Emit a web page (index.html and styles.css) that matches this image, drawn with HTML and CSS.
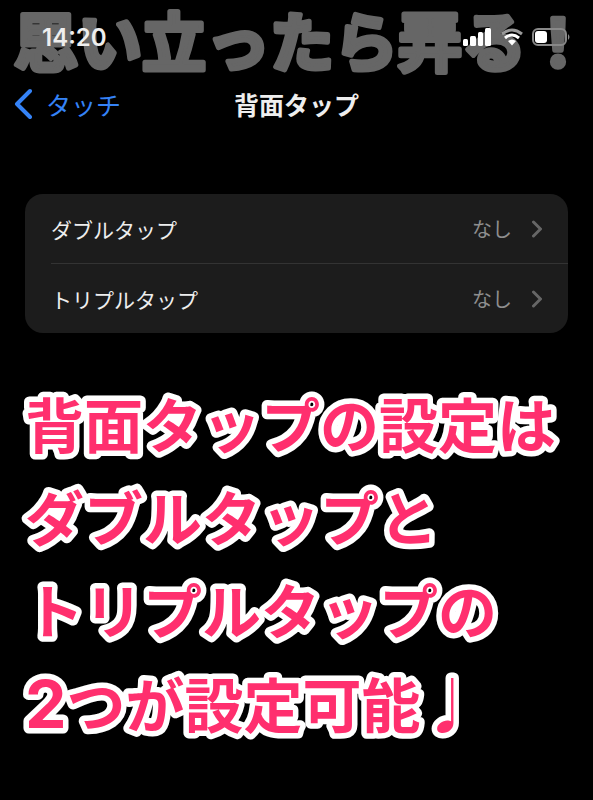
FILE: index.html
```
<!DOCTYPE html>
<html lang="ja">
<head>
<meta charset="utf-8">
<meta name="viewport" content="width=device-width, initial-scale=1">
<title>背面タップ</title>
<link rel="stylesheet" href="styles.css">
</head>
<body>
<header class="status">
	<svg class="watermark"><text x="14" y="66">思い立ったら弄る！</text></svg>
	<span class="time">14:20</span>
	<div class="indicators">
		<svg class="signal" width="29" height="20" viewBox="0 0 29 20">
			<rect x="0" y="12" width="5" height="7" rx="1.5"/>
			<rect x="7" y="9" width="6" height="10" rx="1.5"/>
			<rect x="15" y="5" width="5" height="14" rx="1.5"/>
			<rect x="22" y="1" width="6" height="18" rx="1.5"/>
		</svg>
		<svg class="wifi" width="22" height="20" viewBox="0 0 22 20">
			<path class="arc dim" d="M1 7Q11 -1 21 7"/>
			<path class="arc" d="M4 11Q11 5 18 11"/>
			<path d="M7 14Q11 11 15 14L11 18.500Z"/>
		</svg>
		<svg class="battery" width="39" height="20" viewBox="0 0 39 20">
			<rect class="shell" x="1" y="2" width="33" height="16" rx="5"/>
			<rect x="3" y="4" width="12" height="12" rx="3"/>
			<path class="cap" d="M36 7Q39 10 36 13Z"/>
		</svg>
	</div>
</header>

<nav class="nav">
	<a class="back" href="#">
		<svg width="18" height="32" viewBox="0 0 18 32"><path d="M16 3L3 16L16 29"/></svg>
		タッチ
	</a>
	<h1>背面タップ</h1>
</nav>

<main>
	<ul class="list">
		<li><a href="#">
			<span class="label">ダブルタップ</span>
			<span class="value">なし</span>
			<svg class="chevron" width="10" height="18" viewBox="0 0 10 18"><path d="M1.500 2L8.500 9L1.500 16"/></svg>
		</a></li>
		<li><a href="#">
			<span class="label">トリプルタップ</span>
			<span class="value">なし</span>
			<svg class="chevron" width="10" height="18" viewBox="0 0 10 18"><path d="M1.500 2L8.500 9L1.500 16"/></svg>
		</a></li>
	</ul>
	<svg class="caption">
		<text x="25" y="73">背面タップの設定は</text>
		<text x="25" y="166">ダブルタップと</text>
		<text x="25" y="259">トリプルタップの</text>
		<text x="25" y="353"><tspan class="num">2</tspan>つが設定可能♩</text>
	</svg>
</main>
</body>
</html>
```
FILE: styles.css
```
* {
	box-sizing: border-box;
}
body {
	margin: 0;
	background-color: #000;
	color: #eee;
	font-family: "Noto Sans CJK JP", sans-serif;
}
a {
	color: inherit;
	text-decoration: none;
}

/* ステータスバー */
.status {
	position: relative;
	display: flex;
	justify-content: space-between;
	align-items: center;
	height: 74px;
	padding: 0 22px 0 42px;
}
.watermark {
	position: absolute;
	left: 0;
	top: 0;
	width: 100%;
	height: 100%;
	overflow: visible;
	fill: #666;
	font-size: 64px;
	font-weight: 700;
	stroke: #666;
	stroke-width: 5px;
	stroke-linejoin: round;
}
.time {
	position: relative;
	font-family: Inter, sans-serif;
	font-size: 24px;
	font-weight: 600;
}
.indicators {
	position: relative;
	display: flex;
	gap: 9px;
	fill: #fff;
}
.arc {
	fill: none;
	stroke: #fff;
	stroke-width: 3;
}
.dim {
	stroke: #999;
}
.shell {
	fill: none;
	stroke: #888;
	stroke-width: 2;
}
.cap {
	fill: #888;
}

/* ナビゲーション */
.nav {
	display: grid;
	grid-template-columns: 1fr auto 1fr;
	align-items: center;
	height: 60px;
	padding: 0 14px;
}
.back {
	display: flex;
	align-items: center;
	gap: 14px;
	color: #3583f7;
	font-size: 25px;
}
.back path {
	fill: none;
	stroke: #3583f7;
	stroke-width: 4;
	stroke-linecap: round;
	stroke-linejoin: round;
}
.nav h1 {
	margin: 0;
	font-size: 25px;
	font-weight: 700;
}

/* 設定リスト */
.list {
	margin: 60px 25px 0;
	padding: 0 0 0 26px;
	background-color: #1c1c1c;
	border-radius: 18px;
	list-style: none;
}
.list li + li {
	border-top: 1px solid #333;
}
.list a {
	display: flex;
	align-items: center;
	height: 69px;
	padding-right: 26px;
	font-size: 21px;
}
.label {
	flex: 1;
}
.value {
	margin-right: 20px;
	color: #8e8e8e;
	font-size: 20px;
}
.chevron path {
	fill: none;
	stroke: #666;
	stroke-width: 3;
	stroke-linecap: round;
	stroke-linejoin: round;
}

/* 説明文 (白フチ付き) */
.caption {
	display: block;
	width: 100%;
	height: 376px;
	margin-top: 42px;
	fill: #ff2f6e;
	font-size: 59px;
	font-weight: 700;
	stroke: #fff;
	stroke-width: 11px;
	stroke-linejoin: round;
	paint-order: stroke fill;
}
.num {
	font-family: Inter, sans-serif;
	font-size: 66px;
}
```
